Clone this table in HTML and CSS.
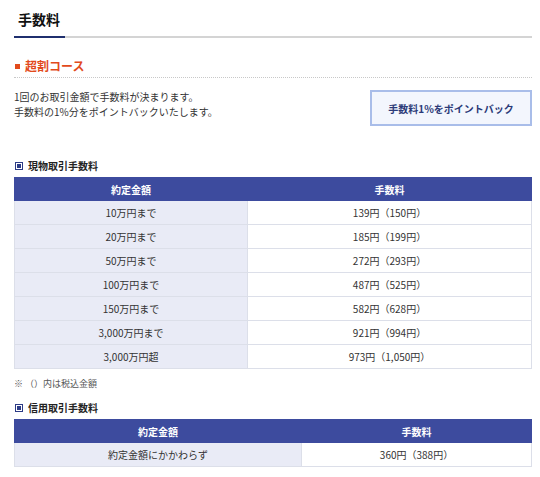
FILE: index.html
```html
<!DOCTYPE html>
<html lang="ja">
<head>
<meta charset="utf-8">
<link rel="stylesheet" href="styles.css">
</head>
<body>
<div class="page">
  <div class="title-bar"><h1 class="title">手数料</h1></div>

  <h2 class="course"><span class="course-mark"></span>超割コース</h2>

  <div class="intro">
    <p class="intro-text">1回のお取引金額で手数料が決まります。<br>手数料の1%分をポイントバックいたします。</p>
    <div class="point-box">手数料1%をポイントバック</div>
  </div>

  <h3 class="sub"><span class="sub-mark"></span>現物取引手数料</h3>
  <table class="fee fee-cash">
    <thead>
      <tr><th class="col-a">約定金額</th><th>手数料</th></tr>
    </thead>
    <tbody>
      <tr><td class="col-a">10万円まで</td><td>139円（150円）</td></tr>
      <tr><td class="col-a">20万円まで</td><td>185円（199円）</td></tr>
      <tr><td class="col-a">50万円まで</td><td>272円（293円）</td></tr>
      <tr><td class="col-a">100万円まで</td><td>487円（525円）</td></tr>
      <tr><td class="col-a">150万円まで</td><td>582円（628円）</td></tr>
      <tr><td class="col-a">3,000万円まで</td><td>921円（994円）</td></tr>
      <tr><td class="col-a">3,000万円超</td><td>973円（1,050円）</td></tr>
    </tbody>
  </table>
  <p class="note">※ （）内は税込金額</p>

  <h3 class="sub sub-2"><span class="sub-mark"></span>信用取引手数料</h3>
  <table class="fee fee-margin">
    <thead>
      <tr><th class="col-a">約定金額</th><th>手数料</th></tr>
    </thead>
    <tbody>
      <tr><td class="col-a">約定金額にかかわらず</td><td>360円（388円）</td></tr>
    </tbody>
  </table>
</div>
</body>
</html>
```

FILE: styles.css
```css
html, body {
  margin: 0;
  padding: 0;
  background: #ffffff;
}

body {
  font-family: "Noto Sans CJK JP", "Noto Sans", sans-serif;
  color: #333333;
  font-size: 10px;
}

.page {
  width: 518px;
  padding: 0 0 0 14px;
}

.title-bar {
  display: flex;
  border-bottom: 2px solid #d4d4d4;
}

.title {
  margin: 0 0 -2px 0;
  padding: 9px 5px 7px 4px;
  font-size: 14px;
  line-height: 20px;
  font-weight: bold;
  color: #111111;
  border-bottom: 2px solid #1f2f6e;
}

.course {
  margin: 19px 0 0 0;
  padding: 0 0 2px 0;
  font-size: 12px;
  line-height: 18px;
  font-weight: bold;
  color: #e24a1c;
  border-bottom: 1px dotted #c8c8c8;
  display: flex;
  align-items: center;
}

.course-mark {
  width: 5px;
  height: 5px;
  background: #e24a1c;
  margin: 1px 5px 0 1px;
}

.intro {
  display: flex;
  justify-content: space-between;
  align-items: flex-start;
  margin-top: 10px;
}

.intro-text {
  margin: 0;
  padding-top: 1px;
  font-size: 10px;
  line-height: 15px;
  color: #333333;
}

.point-box {
  margin-top: 2px;
  width: 158px;
  height: 32px;
  border: 2px solid #a9bde9;
  background: #f3f6fd;
  display: flex;
  align-items: center;
  justify-content: center;
  font-size: 10px;
  font-weight: bold;
  color: #2b3a78;
}

.sub {
  margin: 32px 0 0 0;
  font-size: 10px;
  line-height: 16px;
  font-weight: bold;
  color: #222222;
  display: flex;
  align-items: center;
}

.sub-2 {
  margin-top: 9px;
}

.sub-mark {
  box-sizing: border-box;
  width: 8px;
  height: 8px;
  border: 1px solid #2c3b86;
  background: #2c3b86;
  box-shadow: inset 0 0 0 1px #ffffff;
  margin: 0 5px 0 1px;
}

.fee {
  margin-top: 3px;
  width: 518px;
  border-collapse: collapse;
  table-layout: fixed;
  font-size: 10px;
}

.fee th {
  background: #3d4b9e;
  color: #ffffff;
  font-weight: bold;
  height: 22px;
  padding: 0;
  border: 1px solid #3d4b9e;
  border-left-color: #9aa3d3;
  text-align: center;
}

.fee th:first-child {
  border-left-color: #3d4b9e;
}

.fee td {
  height: 23px;
  padding: 0;
  text-align: center;
  color: #333333;
  border: 1px solid #dcdfe9;
  background: #ffffff;
}

.fee td.col-a {
  background: #e9ebf6;
}

.fee-cash .col-a {
  width: 232px;
}

.fee-margin .col-a {
  width: 286px;
}

.note {
  margin: 8px 0 0 0;
  font-size: 9px;
  line-height: 14px;
  color: #555555;
}
```
